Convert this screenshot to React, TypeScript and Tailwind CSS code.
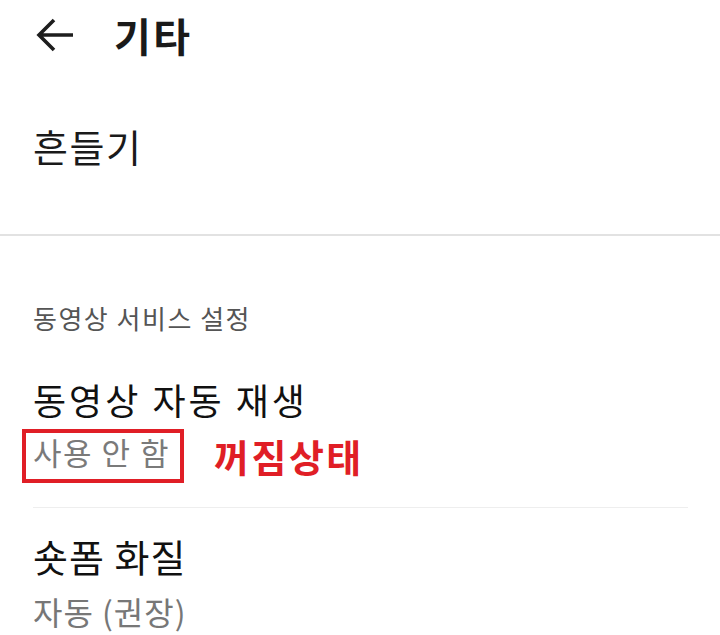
import React from "react";

const font = { fontFamily: '"Noto Sans CJK KR", "Noto Sans", sans-serif' };

export default function App() {
  return (
    <div className="w-[720px] h-[635px] bg-white overflow-hidden text-[#1a1a1a]" style={font}>
      <div className="h-[70px] flex items-center">
        <svg className="ml-[35px]" width="40" height="36" viewBox="0 0 40 36" fill="none">
          <path d="M4 18 H38 M19 3 L4 18 L19 33" stroke="#1e1e1e" strokeWidth="3.6" strokeLinecap="butt" strokeLinejoin="miter" />
        </svg>
        <div className="ml-[39px] text-[40px] leading-[38px] font-bold tracking-[2.5px]">기타</div>
      </div>
      <div className="mt-[57px] ml-[33px] text-[38px] leading-[38px] tracking-[1.5px]">흔들기</div>
      <div className="mt-[69px] h-[2px] bg-[#e2e2e2]" />
      <div className="mt-[69px] ml-[33px] text-[26px] leading-[26px] tracking-[1.5px] text-[#555555]">동영상 서비스 설정</div>
      <div className="mt-[50px] ml-[33px] text-[36px] leading-[36px] tracking-[3px] text-[#111111]">동영상 자동 재생</div>
      <div className="mt-[12px] flex items-center">
        <div className="ml-[22px] border-[4px] border-[#e01e26] pl-[7px] pr-[10px] pt-[4px] pb-[12px]">
          <div className="text-[31px] leading-[30px] tracking-[1.5px] text-[#7a7a7a]">사용 안 함</div>
        </div>
        <div className="ml-[30px] text-[38px] leading-[36px] font-bold tracking-[2.5px] text-[#e01e26]">꺼짐상태</div>
      </div>
      <div className="mt-[24px] ml-[33px] mr-[32px] h-[1px] bg-[#eeeeee]" />
      <div className="mt-[29px] ml-[33px] text-[38px] leading-[38px] tracking-[1px] text-[#111111]">숏폼 화질</div>
      <div className="mt-[20px] ml-[33px] text-[32px] leading-[32px] tracking-[1px] text-[#777777]">자동 (권장)</div>
    </div>
  );
}
